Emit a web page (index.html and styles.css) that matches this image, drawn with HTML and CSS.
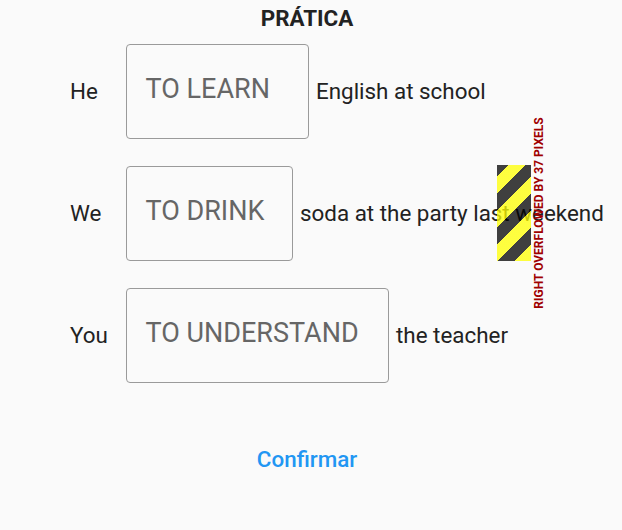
FILE: index.html
```html
<!DOCTYPE html>
<html>
<head>
<meta charset="utf-8">
<link rel="stylesheet" href="styles.css">
</head>
<body>
<div class="page">
  <h1 class="title">PRÁTICA</h1>
  <div class="rows">
    <div class="row">
      <span class="label">He</span>
      <div class="box" style="width:183px"><span class="box-text">TO LEARN</span></div>
      <span class="rest">English at school</span>
    </div>
    <div class="row">
      <span class="label">We</span>
      <div class="box" style="width:167px"><span class="box-text">TO DRINK</span></div>
      <span class="rest">soda at the party last weekend</span>
      <div class="overflow-stripes"></div>
      <div class="overflow-label">RIGHT OVERFLOWED BY 37 PIXELS</div>
    </div>
    <div class="row">
      <span class="label">You</span>
      <div class="box" style="width:263px"><span class="box-text">TO UNDERSTAND</span></div>
      <span class="rest">the teacher</span>
    </div>
  </div>
  <div class="actions">
    <button class="confirm">Confirmar</button>
  </div>
</div>
</body>
</html>
```

FILE: styles.css
```css
html, body {
  margin: 0;
  padding: 0;
  background: #fafafa;
}
body {
  font-family: Roboto, "Noto Sans", sans-serif;
  color: #222222;
  width: 622px;
  height: 530px;
  overflow: hidden;
}
.page {
  display: flex;
  flex-direction: column;
}
.title {
  margin: 0;
  height: 43px;
  line-height: 36px;
  padding-right: 8px;
  font-size: 22.4px;
  font-weight: 700;
  text-align: center;
  color: #222222;
}
.rows {
  display: flex;
  flex-direction: column;
  gap: 26px;
  padding-left: 70px;
  width: 461px;
}
.row {
  position: relative;
  display: flex;
  align-items: center;
  height: 96px;
  white-space: nowrap;
}
.label {
  width: 56px;
  flex: none;
  font-size: 22.4px;
  line-height: 26px;
}
.box {
  flex: none;
  box-sizing: border-box;
  height: 95px;
  border: 1.5px solid #9a9a9a;
  border-radius: 4px;
  padding: 0 0 4px 18.5px;
  display: flex;
  align-items: center;
}
.box-text {
  font-size: 27px;
  line-height: 30px;
  color: #666666;
}
.rest {
  margin-left: 7px;
  font-size: 22.4px;
  line-height: 26px;
}
.overflow-stripes {
  position: absolute;
  right: 0;
  top: 0;
  width: 34px;
  height: 96px;
  background: repeating-linear-gradient(-45deg,
    rgba(255, 255, 0, 0.75) 0px, rgba(255, 255, 0, 0.75) 12px,
    rgba(0, 0, 0, 0.75) 12px, rgba(0, 0, 0, 0.75) 24px);
}
.overflow-label {
  position: absolute;
  left: 368.5px;
  top: 42px;
  width: 200px;
  text-align: center;
  transform: rotate(-90deg);
  font-size: 12px;
  line-height: 12px;
  font-weight: 700;
  color: #a00000;
}
.actions {
  display: flex;
  justify-content: center;
  margin-top: 63px;
  padding-right: 8px;
}
.confirm {
  border: none;
  background: none;
  font-family: Roboto, sans-serif;
  font-size: 22.4px;
  font-weight: 500;
  line-height: 26px;
  color: #2196f3;
  padding: 0;
}
```
